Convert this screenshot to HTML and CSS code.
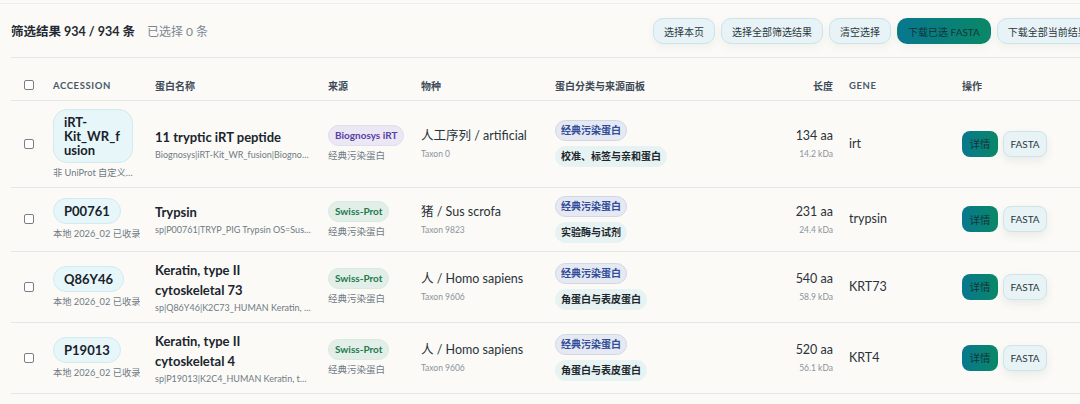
FILE: index.html
```html
<!DOCTYPE html>
<html lang="zh">
<head>
<meta charset="utf-8">
<link rel="stylesheet" href="styles.css">
</head>
<body>
<div class="page">
  <div class="toolbar">
    <div class="summary">
      <span class="count">筛选结果 934 / 934 条</span>
      <span class="selected">已选择 0 条</span>
    </div>
    <div class="actions">
      <button class="btn">选择本页</button>
      <button class="btn">选择全部筛选结果</button>
      <button class="btn">清空选择</button>
      <button class="btn primary">下载已选 FASTA</button>
      <button class="btn">下载全部当前结果 FASTA</button>
    </div>
  </div>

  <table class="grid">
    <colgroup>
      <col class="c-check"><col class="c-acc"><col class="c-name"><col class="c-src"><col class="c-sp"><col class="c-cat"><col class="c-len"><col class="c-gene"><col class="c-op">
    </colgroup>
    <thead>
      <tr>
        <th class="check"><span class="box"></span></th>
        <th class="latin">ACCESSION</th>
        <th>蛋白名称</th>
        <th>来源</th>
        <th>物种</th>
        <th>蛋白分类与来源面板</th>
        <th class="num">长度</th>
        <th class="latin">GENE</th>
        <th>操作</th>
      </tr>
    </thead>
    <tbody>
      <tr>
        <td class="check"><span class="box"></span></td>
        <td class="acc-cell"><div class="stack"><div class="acc">iRT-Kit_WR_fusion</div><div class="sub trunc">非 UniProt 自定义序列</div></div></td>
        <td class="name-cell"><div class="pname">11 tryptic iRT peptide</div><div class="sub trunc">Biognosys|iRT-Kit_WR_fusion|Biognosys iRT Kit</div></td>
        <td><div class="stack"><span class="tag purple">Biognosys iRT</span><div class="sub">经典污染蛋白</div></div></td>
        <td><div class="main">人工序列 / artificial</div><div class="tiny">Taxon 0</div></td>
        <td><div class="stack cats"><span class="tag blue">经典污染蛋白</span><span class="tag mint">校准、标签与亲和蛋白</span></div></td>
        <td class="num"><div class="main">134 aa</div><div class="tiny">14.2 kDa</div></td>
        <td><div class="main">irt</div></td>
        <td><div class="ops"><button class="op detail">详情</button><button class="op fasta">FASTA</button></div></td>
      </tr>
      <tr>
        <td class="check"><span class="box"></span></td>
        <td class="acc-cell"><div class="stack"><div class="acc">P00761</div><div class="sub trunc">本地 2026_02 已收录</div></div></td>
        <td class="name-cell"><div class="pname">Trypsin</div><div class="sub trunc">sp|P00761|TRYP_PIG Trypsin OS=Sus scrofa OX=9823</div></td>
        <td><div class="stack"><span class="tag green">Swiss-Prot</span><div class="sub">经典污染蛋白</div></div></td>
        <td><div class="main">猪 / Sus scrofa</div><div class="tiny">Taxon 9823</div></td>
        <td><div class="stack cats"><span class="tag blue">经典污染蛋白</span><span class="tag mint">实验酶与试剂</span></div></td>
        <td class="num"><div class="main">231 aa</div><div class="tiny">24.4 kDa</div></td>
        <td><div class="main">trypsin</div></td>
        <td><div class="ops"><button class="op detail">详情</button><button class="op fasta">FASTA</button></div></td>
      </tr>
      <tr>
        <td class="check"><span class="box"></span></td>
        <td class="acc-cell"><div class="stack"><div class="acc">Q86Y46</div><div class="sub trunc">本地 2026_02 已收录</div></div></td>
        <td class="name-cell"><div class="pname">Keratin, type II cytoskeletal 73</div><div class="sub trunc">sp|Q86Y46|K2C73_HUMAN Keratin, type II cytoskeletal 73</div></td>
        <td><div class="stack"><span class="tag green">Swiss-Prot</span><div class="sub">经典污染蛋白</div></div></td>
        <td><div class="main">人 / Homo sapiens</div><div class="tiny">Taxon 9606</div></td>
        <td><div class="stack cats"><span class="tag blue">经典污染蛋白</span><span class="tag mint">角蛋白与表皮蛋白</span></div></td>
        <td class="num"><div class="main">540 aa</div><div class="tiny">58.9 kDa</div></td>
        <td><div class="main">KRT73</div></td>
        <td><div class="ops"><button class="op detail">详情</button><button class="op fasta">FASTA</button></div></td>
      </tr>
      <tr>
        <td class="check"><span class="box"></span></td>
        <td class="acc-cell"><div class="stack"><div class="acc">P19013</div><div class="sub trunc">本地 2026_02 已收录</div></div></td>
        <td class="name-cell"><div class="pname">Keratin, type II cytoskeletal 4</div><div class="sub trunc">sp|P19013|K2C4_HUMAN Keratin, type II cytoskeletal 4</div></td>
        <td><div class="stack"><span class="tag green">Swiss-Prot</span><div class="sub">经典污染蛋白</div></div></td>
        <td><div class="main">人 / Homo sapiens</div><div class="tiny">Taxon 9606</div></td>
        <td><div class="stack cats"><span class="tag blue">经典污染蛋白</span><span class="tag mint">角蛋白与表皮蛋白</span></div></td>
        <td class="num"><div class="main">520 aa</div><div class="tiny">56.1 kDa</div></td>
        <td><div class="main">KRT4</div></td>
        <td><div class="ops"><button class="op detail">详情</button><button class="op fasta">FASTA</button></div></td>
      </tr>
    </tbody>
  </table>
</div>
</body>
</html>
```

FILE: styles.css
```css
* { box-sizing: border-box; }
html, body { margin: 0; padding: 0; }
body {
  background: #fbfaf7;
  font-family: Lato, "Noto Sans CJK SC", sans-serif;
  color: #1f2a33;
  width: 1080px;
  height: 404px;
  overflow: hidden;
}
.page {
  margin-top: 3px;
  border-top: 1px solid #eceef0;
  padding-left: 11px;
}
.toolbar {
  display: flex;
  align-items: center;
  height: 54px;
  border-bottom: 1px solid #e4e7ea;
  white-space: nowrap;
  overflow: hidden;
}
.summary {
  flex: none;
  width: 642px;
  display: flex;
  align-items: baseline;
  gap: 12px;
}
.count { font-size: 12.5px; font-weight: 700; color: #1f2a33; }
.selected { font-size: 12px; color: #7b8692; }
.actions { display: flex; gap: 6px; flex: none; padding-top: 1px; }
.btn {
  font-family: inherit;
  font-size: 10px;
  color: #2b3740;
  height: 26px;
  padding: 0 10px;
  border-radius: 10px;
  border: 1px solid #cde4ea;
  background: #e7f3f6;
  box-shadow: 0 3px 8px rgba(30, 60, 70, 0.06);
  white-space: nowrap;
}
.btn.primary {
  border-color: transparent;
  background: linear-gradient(90deg, #08778f, #0a8866);
  color: #11343a;
}

.grid {
  margin-top: 11px;
  width: 1069px;
  border-collapse: collapse;
  table-layout: fixed;
}
.c-check { width: 42px; }
.c-acc { width: 102px; }
.c-name { width: 173px; }
.c-src { width: 93px; }
.c-sp { width: 134px; }
.c-cat { width: 205px; }
.c-len { width: 89px; }
.c-gene { width: 113px; }
.c-op { width: 118px; }

th {
  height: 31px;
  text-align: left;
  font-size: 10px;
  font-weight: 700;
  color: #3d4b57;
  padding: 2px 0 0 0;
  border-bottom: 1px solid #e4e7ea;
  vertical-align: middle;
}
th.latin { font-size: 9.5px; letter-spacing: 0.6px; color: #4a5966; }
th.num, td.num { text-align: right; padding-right: 16px; }

td {
  padding: 8px 16px 8px 0;
  border-bottom: 1px solid #e4e7ea;
  vertical-align: middle;
}
th.check, td.check { padding-left: 13px; padding-right: 0; }
.box {
  display: block;
  width: 10px;
  height: 10px;
  border: 1px solid #7a7f84;
  border-radius: 2px;
  background: #fff;
}

.stack { display: flex; flex-direction: column; align-items: flex-start; }

.acc {
  max-width: 80px;
  padding: 5px 10px;
  font-size: 13px;
  line-height: 14px;
  font-weight: 700;
  color: #17222b;
  background: #e7f6f9;
  border: 1px solid #d1ebf1;
  border-radius: 14px;
  overflow-wrap: anywhere;
}
.sub {
  font-size: 9.5px;
  color: #6f7a84;
  line-height: 13px;
}
.acc-cell .sub { margin-top: 3px; font-size: 9.25px; }
.trunc { max-width: 100%; white-space: nowrap; overflow: hidden; text-overflow: ellipsis; }
td.acc-cell { padding-right: 13px; }
td.name-cell { padding-right: 17px; }

.pname {
  font-size: 13px;
  font-weight: 700;
  line-height: 20px;
  color: #1a252e;
}
.name-cell .sub { margin-top: 1px; font-size: 9px; }

.tag {
  display: block;
  height: 21px;
  line-height: 19px;
  padding: 0 6px;
  border-radius: 11px;
  font-size: 10px;
  font-weight: 700;
  border: 1px solid transparent;
  white-space: nowrap;
}
.stack .tag + .sub { margin-top: 3px; }
.purple { background: #ebe7f5; color: #5a40a3; border-color: #e2dcef; }
.green { background: #e2efe8; color: #1e7a4f; border-color: #d9eae0; }
.blue { background: #e6e9f2; color: #2f4d98; border-color: #cfd7e7; padding: 0 5px; }
.mint { background: #e6f3f2; color: #1d262c; border-color: #e6f3f2; padding: 0 5px; }
.cats { gap: 5px; }

.main { font-size: 12.5px; line-height: 20px; color: #2a333a; }
.tiny { font-size: 8.5px; color: #8a949c; line-height: 13px; margin-top: 2px; }

.ops { display: flex; gap: 5px; align-items: center; }
.op {
  font-family: inherit;
  height: 26px;
  border-radius: 8px;
  font-size: 10.5px;
  padding: 0;
}
.detail {
  width: 36px;
  border: none;
  background: linear-gradient(90deg, #08778f, #0a8866);
  color: #11343a;
}
.fasta {
  width: 44px;
  font-size: 10px;
  border: 1px solid #cde4ea;
  background: #e7f3f5;
  color: #2b3740;
  box-shadow: 0 4px 10px rgba(30, 60, 70, 0.08);
}
```
